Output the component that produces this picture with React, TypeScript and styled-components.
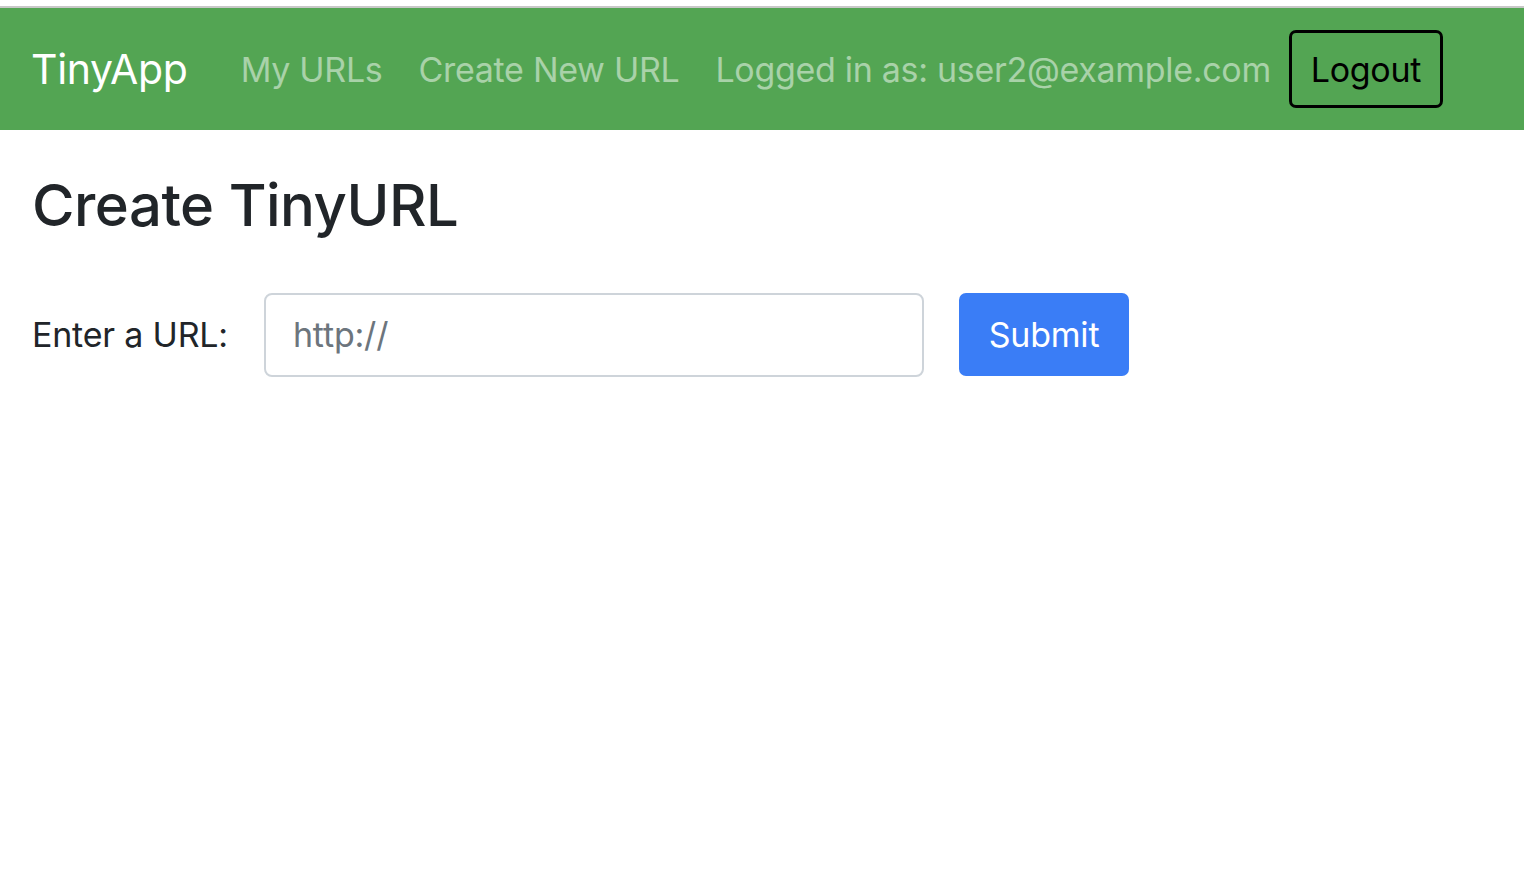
import React from "react";
import styled, { createGlobalStyle } from "styled-components";

const Global = createGlobalStyle`
  html, body { margin: 0; padding: 0; background: #fff; }
  body { font-family: Inter, "Noto Sans", "Liberation Sans", sans-serif; color: #212529; }
  * { box-sizing: border-box; }
`;

const Page = styled.div`
  display: flex;
  flex-direction: column;
  min-height: 888px;
`;

const TopEdge = styled.div`
  height: 8px;
  border-top: 6px solid #ffffff;
  background: #c8c8c8;
`;

const NavBar = styled.nav`
  height: 122px;
  background: #53a553;
  display: flex;
  align-items: center;
  padding: 0 32px;
`;

const Brand = styled.a`
  font-size: 41px;
  color: #ffffff;
  text-decoration: none;
  margin-right: 53px;
  margin-left: -1px;
  letter-spacing: -0.3px;
`;

const NavLinks = styled.div`
  display: flex;
  align-items: center;
  gap: 36px;
`;

const NavLink = styled.a`
  font-size: 34px;
  color: rgba(255, 255, 255, 0.5);
  text-decoration: none;
  letter-spacing: -0.3px;
`;

const LogoutButton = styled.button`
  margin-left: 18px;
  width: 154px;
  height: 78px;
  border: 3px solid #000;
  border-radius: 7px;
  background: transparent;
  color: #000;
  font-family: inherit;
  font-size: 34px;
  letter-spacing: -0.3px;
  padding: 0;
`;

const Main = styled.main`
  padding: 41px 32px 0;
  display: flex;
  flex-direction: column;
`;

const Title = styled.h1`
  margin: 0 0 52px;
  font-size: 58px;
  font-weight: 500;
  line-height: 1.2;
  letter-spacing: -0.5px;
  color: #212529;
`;

const Form = styled.form`
  display: flex;
  align-items: center;
`;

const Label = styled.label`
  font-size: 34px;
  color: #212529;
  margin-right: 36px;
  letter-spacing: -0.2px;
`;

const UrlInput = styled.input`
  width: 660px;
  height: 84px;
  border: 2px solid #ced4da;
  border-radius: 8px;
  padding: 0 27px;
  font-family: inherit;
  font-size: 34px;
  color: #495057;
  letter-spacing: -0.2px;
  margin-right: 35px;
  &::placeholder { color: #6c757d; }
`;

const SubmitButton = styled.button`
  width: 170px;
  height: 83px;
  border: none;
  border-radius: 7px;
  background: #3a7df6;
  color: #ffffff;
  font-family: inherit;
  font-size: 34px;
  letter-spacing: -0.2px;
  padding: 0;
`;

export default function App() {
  return (
    <Page>
      <Global />
      <TopEdge />
      <NavBar>
        <Brand href="#">TinyApp</Brand>
        <NavLinks>
          <NavLink href="#">My URLs</NavLink>
          <NavLink href="#">Create New URL</NavLink>
          <NavLink href="#">Logged in as: user2@example.com</NavLink>
        </NavLinks>
        <LogoutButton type="button">Logout</LogoutButton>
      </NavBar>
      <Main>
        <Title>Create TinyURL</Title>
        <Form onSubmit={(e) => e.preventDefault()}>
          <Label htmlFor="longURL">Enter a URL:</Label>
          <UrlInput id="longURL" type="text" placeholder="http://" />
          <SubmitButton type="submit">Submit</SubmitButton>
        </Form>
      </Main>
    </Page>
  );
}
